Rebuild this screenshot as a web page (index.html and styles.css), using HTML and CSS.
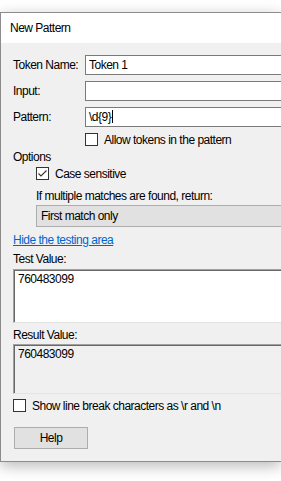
FILE: index.html
```html
<!DOCTYPE html>
<html lang="en">
<head>
  <meta charset="UTF-8">
  <title>New Pattern</title>
  <link rel="stylesheet" href="styles.css">
</head>
<body>
  <div class="window">
    <div class="titlebar">New Pattern</div>
    <div class="content">
      <div class="field-row">
        <label class="field-label">Token Name:</label>
        <div class="textbox">Token 1</div>
      </div>
      <div class="field-row gap">
        <label class="field-label">Input:</label>
        <div class="textbox"></div>
      </div>
      <div class="field-row gap">
        <label class="field-label">Pattern:</label>
        <div class="textbox">\d{9}<span class="caret"></span></div>
      </div>
      <div class="check-row allow">
        <span class="checkbox"></span>
        <span>Allow tokens in the pattern</span>
      </div>
      <div class="line options-title">Options</div>
      <div class="check-row case">
        <span class="checkbox">
          <svg width="11" height="11" viewBox="0 0 11 11"><path d="M1.5 5.5 L4 8 L9.5 2.5" fill="none" stroke="#333" stroke-width="1.1"/></svg>
        </span>
        <span>Case sensitive</span>
      </div>
      <div class="line indent multi">If multiple matches are found, return:</div>
      <div class="dropdown">First match only</div>
      <div class="line link">Hide the testing area</div>
      <div class="line test-label">Test Value:</div>
      <div class="memo test">760483099</div>
      <div class="line result-label">Result Value:</div>
      <div class="memo result">760483099</div>
      <div class="check-row breaks">
        <span class="checkbox"></span>
        <span>Show line break characters as \r and \n</span>
      </div>
      <div class="button">Help</div>
    </div>
  </div>
</body>
</html>
```

FILE: styles.css
```css
html, body {
  margin: 0;
  height: 100%;
  overflow: hidden;
  background: #ffffff;
}
body {
  font-family: "Liberation Sans", Arial, sans-serif;
  font-size: 12px;
  letter-spacing: -0.5px;
  color: #000;
  padding-top: 12px;
  box-sizing: border-box;
}
.window {
  border: 1px solid #8c8c8c;
  border-right: none;
  box-shadow: 0 4px 14px rgba(0,0,0,0.28);
}
.titlebar {
  height: 30px;
  line-height: 30px;
  padding-left: 9px;
  background: #fff;
}
.content {
  background: #f0f0f0;
  padding: 12px 0 12px 12px;
}
.field-row {
  display: flex;
  align-items: center;
  height: 20px;
}
.field-row.gap {
  margin-top: 6px;
}
.field-label {
  width: 72px;
  flex-shrink: 0;
}
.textbox {
  flex: 1;
  height: 20px;
  box-sizing: border-box;
  border: 1px solid #7a7a7a;
  border-right: none;
  background: #fff;
  line-height: 18px;
  padding-left: 3px;
}
.caret {
  display: inline-block;
  width: 1px;
  height: 13px;
  background: #000;
  vertical-align: -2px;
  margin-left: 1px;
}
.check-row {
  display: flex;
  align-items: center;
  height: 15px;
}
.checkbox {
  width: 13px;
  height: 13px;
  box-sizing: border-box;
  border: 1px solid #333;
  background: #fff;
  margin-right: 6px;
  flex-shrink: 0;
  display: flex;
  align-items: center;
  justify-content: center;
}
.check-row.allow {
  margin-top: 5px;
  padding-left: 72px;
}
.line {
  height: 15px;
  line-height: 15px;
}
.options-title {
  margin-top: 3px;
}
.check-row.case {
  margin-top: 1px;
  padding-left: 23px;
}
.indent {
  padding-left: 23px;
}
.multi {
  margin-top: 8px;
}
.dropdown {
  margin: 1px 0 0 23px;
  height: 22px;
  box-sizing: border-box;
  border: 1px solid #adadad;
  border-right: none;
  background: #e1e1e1;
  line-height: 20px;
  padding-left: 4px;
}
.link {
  margin-top: 6px;
  color: #0066cc;
  text-decoration: underline;
}
.test-label {
  margin-top: 4px;
}
.memo {
  box-sizing: border-box;
  border-top: 1px solid #a0a0a0;
  border-left: 1px solid #a0a0a0;
  border-bottom: 1px solid #e3e3e3;
  box-shadow: inset 1px 1px 0 #696969;
  padding: 2px 0 0 4px;
  line-height: 15px;
}
.memo.test {
  margin-top: 2px;
  height: 54px;
  background: #fff;
}
.result-label {
  margin-top: 5px;
}
.memo.result {
  margin-top: 1px;
  height: 50px;
  background: #f0f0f0;
}
.check-row.breaks {
  margin-top: 4px;
}
.button {
  margin: 14px 0 0 1px;
  width: 74px;
  height: 22px;
  box-sizing: border-box;
  border: 1px solid #adadad;
  background: #e1e1e1;
  text-align: center;
  line-height: 20px;
}
```
